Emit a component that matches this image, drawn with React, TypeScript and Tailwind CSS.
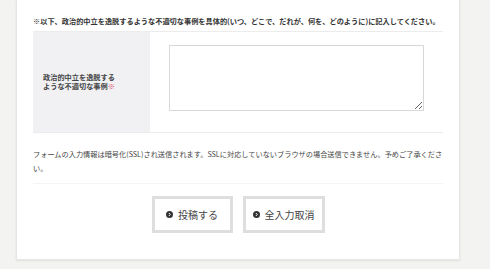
import React from 'react';

const jp = { fontFamily: '"Noto Sans CJK JP", "Noto Sans", sans-serif' };

const CircleArrow: React.FC = () => (
  <svg width="7" height="7" viewBox="0 0 10 10" className="shrink-0">
    <circle cx="5" cy="5" r="5" fill="#333" />
    <path d="M4 2.8 L6.2 5 L4 7.2" stroke="#fff" strokeWidth="1.4" fill="none" />
  </svg>
);

const FormButton: React.FC<{ label: string; width: string }> = ({ label, width }) => (
  <button
    type="button"
    className={`${width} h-[37px] bg-white border-[3px] border-[#dedede] flex items-center justify-center gap-[5px] text-[10px] text-[#444]`}
  >
    <CircleArrow />
    <span>{label}</span>
  </button>
);

export default function App() {
  return (
    <div className="w-[490px] h-[269px] bg-[#f3f3f1] overflow-hidden" style={jp}>
      <div className="ml-[16px] w-[444px] h-[260px] bg-white border-x border-b border-[#e6e6e6] shadow-[0_1px_2px_rgba(0,0,0,0.08)] px-[16px]">
        <p className="pt-[16px] h-[31px] text-[7.2px] leading-[10px] font-bold text-[#333] whitespace-nowrap">
          ※以下、政治的中立を逸脱するような不適切な事例を具体的(いつ、どこで、だれが、何を、どのように)に記入してください。
        </p>
        <div className="flex border-t border-b border-[#ececec] h-[102px]">
          <div className="w-[117px] bg-[#f1f1f4] flex items-center pl-[10px] text-[7.2px] leading-[9.5px] font-bold text-[#444]">
            <span>
              政治的中立を逸脱する
              <br />
              ような不適切な事例<span className="text-[#e0455f]">※</span>
            </span>
          </div>
          <div className="flex-1 pl-[19px] pt-[13px]">
            <textarea className="block w-[255px] h-[66px] border border-[#d8d8d8] bg-white resize-y outline-none" />
          </div>
        </div>
        <p className="pt-[14px] text-[7.2px] leading-[14px] text-[#444]">
          フォームの入力情報は暗号化(SSL)され送信されます。SSLに対応していないブラウザの場合送信できません。予めご了承ください。
        </p>
        <div className="mt-[8px] border-t border-[#f4f4f4] pt-[12px] flex justify-center gap-[10px]">
          <FormButton label="投稿する" width="w-[81px]" />
          <FormButton label="全入力取消" width="w-[82px]" />
        </div>
      </div>
    </div>
  );
}
